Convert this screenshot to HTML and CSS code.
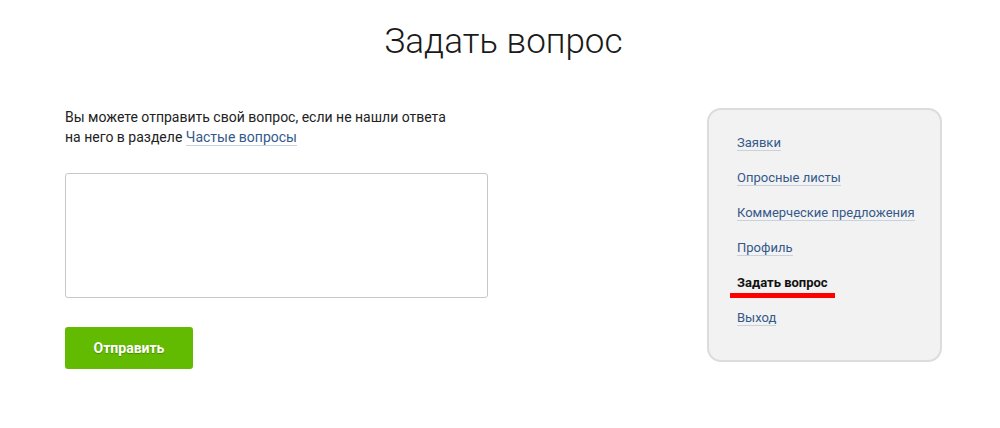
FILE: index.html
```html
<!DOCTYPE html>
<html lang="ru">
<head>
    <meta charset="UTF-8">
    <meta name="viewport" content="width=device-width, initial-scale=1.0">
    <title>Задать вопрос</title>
    <link rel="stylesheet" href="styles.css">
</head>
<body>
    <div class="page">
        <h1 class="page-title">Задать вопрос</h1>
        <div class="content">
            <div class="question-form">
                <p class="intro">
                    Вы можете отправить свой вопрос, если не нашли ответа<br>
                    на него в разделе <a href="#" class="link">Частые вопросы</a>
                </p>
                <textarea class="question-text"></textarea>
                <button class="send-button">Отправить</button>
            </div>
            <ul class="side-menu">
                <li><a href="#" class="link">Заявки</a></li>
                <li><a href="#" class="link">Опросные листы</a></li>
                <li><a href="#" class="link">Коммерческие предложения</a></li>
                <li><a href="#" class="link">Профиль</a></li>
                <li><span class="active">Задать вопрос</span></li>
                <li><a href="#" class="link">Выход</a></li>
            </ul>
        </div>
    </div>
</body>
</html>
```

FILE: styles.css
```css
body {
    margin: 0;
    font-family: Roboto, "Liberation Sans", sans-serif;
    font-size: 14px;
    line-height: 20px;
    color: #222;
    background: #fff;
}
.page {
    padding: 0 58px 0 65px;
}
.page-title {
    margin: 0;
    padding-top: 20px;
    height: 107px;
    box-sizing: border-box;
    text-align: center;
    font-size: 35px;
    font-weight: 300;
    line-height: 44px;
    color: #1a1a1a;
}
.content {
    display: flex;
    justify-content: space-between;
    align-items: flex-start;
}
.question-form {
    display: flex;
    flex-direction: column;
    align-items: flex-start;
}
.intro {
    margin: 0 0 26px;
}
.link {
    color: #34598a;
    text-decoration: none;
    border-bottom: 1px solid #c8d2de;
}
.question-text {
    width: 423px;
    height: 125px;
    box-sizing: border-box;
    border: 1px solid #c8c8c8;
    border-radius: 3px;
    resize: none;
    margin: 0 0 29px;
    font-family: inherit;
}
.send-button {
    width: 128px;
    height: 42px;
    border: none;
    border-radius: 3px;
    background-color: #62bb00;
    color: #fff;
    font-family: inherit;
    font-size: 14px;
    font-weight: bold;
    text-shadow: 0 1px 1px rgba(0, 0, 0, 0.25);
    cursor: pointer;
}
.send-button:hover {
    background-color: #57a800;
}
.side-menu {
    list-style: none;
    margin: 1px 0 0;
    width: 235px;
    box-sizing: border-box;
    padding: 23px 16px 32px 28px;
    background: #f2f2f2;
    border: 2px solid #dcdcdc;
    border-radius: 14px;
    display: flex;
    flex-direction: column;
    gap: 15px;
    font-size: 13px;
}
.side-menu li {
    line-height: 20px;
}
.active {
    position: relative;
    font-weight: bold;
    color: #111;
}
.active::after {
    content: "";
    position: absolute;
    left: -7px;
    right: -7px;
    bottom: -8px;
    height: 5px;
    background: #f00;
}
```
